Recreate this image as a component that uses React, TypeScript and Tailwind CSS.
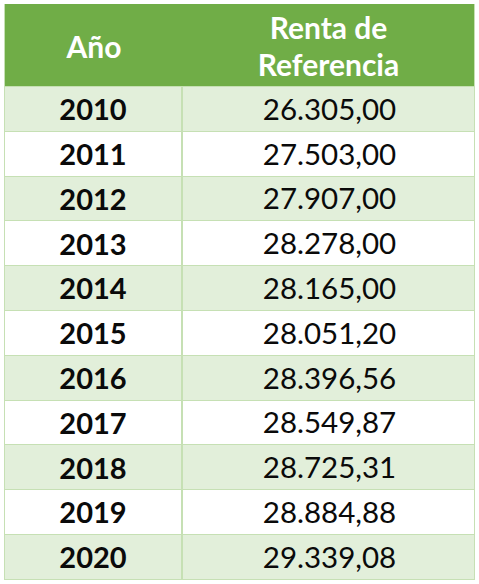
import React from "react";

const rows: [string, string][] = [
  ["2010", "26.305,00"],
  ["2011", "27.503,00"],
  ["2012", "27.907,00"],
  ["2013", "28.278,00"],
  ["2014", "28.165,00"],
  ["2015", "28.051,20"],
  ["2016", "28.396,56"],
  ["2017", "28.549,87"],
  ["2018", "28.725,31"],
  ["2019", "28.884,88"],
  ["2020", "29.339,08"],
];

export default function App() {
  return (
    <div className="w-[479px] h-[584px] bg-white pt-[4px] pl-[4px]" style={{ fontFamily: "Lato, 'Open Sans', sans-serif" }}>
      <div className="w-[471px] border-x border-b border-[#c6e0b4]">
        <div className="flex h-[82px] bg-[#70ad47] text-white font-bold text-[30px]">
          <div className="w-[178px] flex items-center justify-center pt-[2px]">Año</div>
          <div className="flex-1 flex flex-col items-center justify-center leading-[37px] pt-[2px]">
            <span>Renta de</span>
            <span>Referencia</span>
          </div>
        </div>
        {rows.map(([y, v], i) => (
          <div
            key={y}
            className={
              "flex h-[44.8px] border-t border-[#c6e0b4] text-[#0a0a0a] " +
              (i % 2 === 0 ? "bg-[#e2efda]" : "bg-white")
            }
          >
            <div className="w-[178px] border-r-2 border-[#c6e0b4] flex items-center justify-center font-bold text-[29px]">{y}</div>
            <div className="flex-1 flex items-center justify-center pl-[2px] text-[29.5px]">{v}</div>
          </div>
        ))}
      </div>
    </div>
  );
}
